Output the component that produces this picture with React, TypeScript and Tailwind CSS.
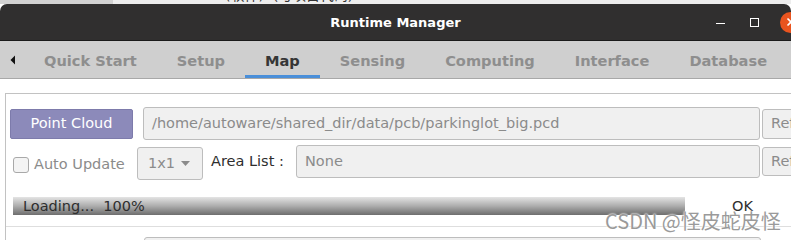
const tabs = [
  { label: "Quick Start", active: false },
  { label: "Setup", active: false },
  { label: "Map", active: true },
  { label: "Sensing", active: false },
  { label: "Computing", active: false },
  { label: "Interface", active: false },
  { label: "Database", active: false },
];

const font = "font-['DejaVu_Sans','Noto_Sans_CJK_SC',sans-serif]";

export default function App() {
  return (
    <div className={`relative h-[240px] w-[791px] overflow-hidden bg-white ${font}`}>
      {/* Desktop strip behind the window */}
      <div className="flex h-[4px] overflow-hidden">
        <div className="w-[113px] bg-[#d2d2d2]" />
        <div className="relative flex-1 bg-[#ededed]">
          <span className="absolute left-[42px] top-[-13px] whitespace-nowrap text-[14px] leading-[16px] text-[#333]">
            autoware (软件)（与项目代码）
          </span>
        </div>
      </div>

      {/* Title bar */}
      <div className="grid h-[37px] grid-cols-[1fr_auto_1fr] items-center rounded-t-[7px] border-b border-[#1a1a1a] bg-[#302f2f]">
        <div />
        <div className="pt-[1px] text-[13px] font-bold text-white">Runtime Manager</div>
        <div className="flex items-center justify-end">
          <div className="mt-[3px] h-[1.5px] w-[9px] bg-white" />
          <div className="ml-[25px] h-[9px] w-[9px] border-[1.5px] border-white" />
          <div className="ml-[21px] mr-[-10px] flex h-[21px] w-[21px] shrink-0 items-center justify-center rounded-full bg-[#e9541f]">
            <svg width="10" height="10" viewBox="0 0 10 10">
              <path d="M1.5 1.5L8.5 8.5M8.5 1.5L1.5 8.5" stroke="white" strokeWidth="1.6" />
            </svg>
          </div>
        </div>
      </div>

      {/* Tab bar */}
      <div className="flex h-[38px] items-stretch overflow-hidden border-b border-[#a8a8a8] bg-[#cfcfcf]">
        <div className="flex w-[24px] shrink-0 items-center pl-[10px] pt-[1px]">
          <svg width="6" height="10" viewBox="0 0 6 10">
            <path d="M5 0.5L0.5 5L5 9.5Z" fill="#111" />
          </svg>
        </div>
        {tabs.map((tab) => (
          <div
            key={tab.label}
            className={`flex shrink-0 items-center whitespace-nowrap px-[20px] text-[14.6px] font-bold ${
              tab.active
                ? "border-b-[3px] border-[#4a8fd9] pt-[5px] text-[#363636]"
                : "pt-[3px] text-[#8e8e8e]"
            }`}
          >
            {tab.label}
          </div>
        ))}
      </div>

      {/* Map page */}
      <div className="ml-[5px] mt-[14px] overflow-hidden whitespace-nowrap border-l border-t border-[#c2c2c2] text-[14.5px]">
        {/* Point Cloud row */}
        <div className="mt-[13px] flex h-[33px] items-center">
          <div className="ml-[4px] flex h-[30px] w-[123px] shrink-0 items-center justify-center rounded-[2px] border border-[#7d7bab] bg-[#8c8aba] text-white">
            Point Cloud
          </div>
          <div className="ml-[10px] flex h-[33px] w-[617px] shrink-0 items-center rounded-[3px] border border-[#bdbdbd] bg-[#f0f0f0] pl-[8px] text-[#8b8b8b]">
            /home/autoware/shared_dir/data/pcb/parkinglot_big.pcd
          </div>
          <div className="ml-[2px] flex h-[30px] w-[60px] shrink-0 items-center rounded-[3px] border border-[#bdbdbd] bg-[#f0f0f0] pl-[8px] text-[#8b8b8b]">
            Ref
          </div>
        </div>

        {/* Area list row */}
        <div className="mt-[5px] flex h-[35px] items-start">
          <div className="flex w-[131px] shrink-0 items-center pl-[7px] pt-[9px]">
            <div className="h-[16px] w-[16px] shrink-0 rounded-[3px] border border-[#a9a9a9] bg-[#f4f4f4]" />
            <span className="ml-[5px] text-[#8b8b8b]">Auto Update</span>
          </div>
          <div className="mt-[2px] flex h-[33px] w-[66px] shrink-0 items-center rounded-[3px] border border-[#bdbdbd] bg-[#f0f0f0] pl-[10px] text-[#8b8b8b]">
            1x1
            <svg className="ml-[6px]" width="9" height="5" viewBox="0 0 9 5">
              <path d="M0 0H9L4.5 5Z" fill="#8b8b8b" />
            </svg>
          </div>
          <div className="ml-[8px] w-[85px] shrink-0 pt-[6px] text-[#2e2e2e]">Area List :</div>
          <div className="flex h-[33px] w-[464px] shrink-0 items-center rounded-[3px] border border-[#bdbdbd] bg-[#f0f0f0] pl-[8px] text-[#8b8b8b]">
            None
          </div>
          <div className="ml-[2px] mt-[2px] flex h-[29px] w-[60px] shrink-0 items-center rounded-[3px] border border-[#bdbdbd] bg-[#f0f0f0] pl-[8px] text-[#8b8b8b]">
            Ref
          </div>
        </div>

        {/* Progress row */}
        <div className="mt-[17px] flex h-[18px] items-center">
          <div className="ml-[7px] flex h-[18px] w-[672px] shrink-0 items-center bg-gradient-to-b from-[#e4e4e4] via-[#adadad] to-[#6e6e6e] pl-[10px] leading-none text-[#2e2e2e]">
            Loading...&nbsp;&nbsp;100%
          </div>
          <div className="ml-[47px] pt-[1px] text-[#2e2e2e]">OK</div>
        </div>

        {/* Next panel */}
        <div className="mt-[11px] border-t border-[#dedede]" />
        <div className="ml-[138px] mt-[10px] h-[20px] w-[617px] rounded-t-[3px] border border-[#bdbdbd] bg-[#f0f0f0]" />
      </div>

      {/* Watermark */}
      <div className="pointer-events-none absolute left-[605px] top-[206px] whitespace-nowrap font-['Noto_Sans_CJK_SC',sans-serif] text-[20px] text-[#9a9a9a] [text-shadow:0_0_2px_white,0_0_2px_white]">
        CSDN @怪皮蛇皮怪
      </div>
    </div>
  );
}
